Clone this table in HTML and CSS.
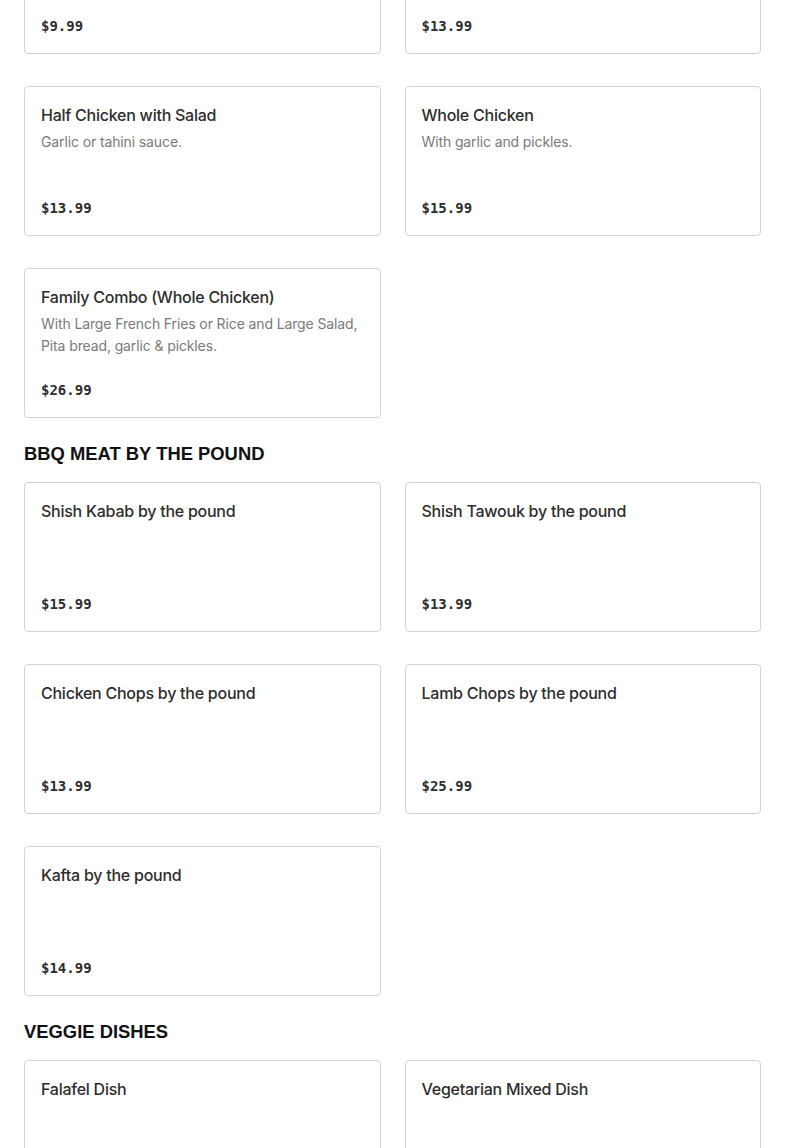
FILE: index.html
```html
<!DOCTYPE html>
<html lang="en">
<head>
<meta charset="utf-8">
<title>Menu</title>
<link rel="stylesheet" href="styles.css">
</head>
<body>
<main class="menu">
  <section class="section section-first">
    <div class="grid">
      <div class="card">
        <h3 class="card-title">Quarter Chicken</h3>
        <p class="card-desc">Garlic or tahini sauce.</p>
        <div class="card-price">$9.99</div>
      </div>
      <div class="card">
        <h3 class="card-title">Half Chicken</h3>
        <p class="card-desc">Garlic or tahini sauce.</p>
        <div class="card-price">$13.99</div>
      </div>
      <div class="card">
        <h3 class="card-title">Half Chicken with Salad</h3>
        <p class="card-desc">Garlic or tahini sauce.</p>
        <div class="card-price">$13.99</div>
      </div>
      <div class="card">
        <h3 class="card-title">Whole Chicken</h3>
        <p class="card-desc">With garlic and pickles.</p>
        <div class="card-price">$15.99</div>
      </div>
      <div class="card">
        <h3 class="card-title">Family Combo (Whole Chicken)</h3>
        <p class="card-desc">With Large French Fries or Rice and Large Salad, Pita bread, garlic &amp; pickles.</p>
        <div class="card-price">$26.99</div>
      </div>
    </div>
  </section>

  <section class="section">
    <h2 class="section-title">BBQ MEAT BY THE POUND</h2>
    <div class="grid">
      <div class="card">
        <h3 class="card-title">Shish Kabab by the pound</h3>
        <div class="card-price">$15.99</div>
      </div>
      <div class="card">
        <h3 class="card-title">Shish Tawouk by the pound</h3>
        <div class="card-price">$13.99</div>
      </div>
      <div class="card">
        <h3 class="card-title">Chicken Chops by the pound</h3>
        <div class="card-price">$13.99</div>
      </div>
      <div class="card">
        <h3 class="card-title">Lamb Chops by the pound</h3>
        <div class="card-price">$25.99</div>
      </div>
      <div class="card">
        <h3 class="card-title">Kafta by the pound</h3>
        <div class="card-price">$14.99</div>
      </div>
    </div>
  </section>

  <section class="section">
    <h2 class="section-title">VEGGIE DISHES</h2>
    <div class="grid">
      <div class="card">
        <h3 class="card-title">Falafel Dish</h3>
        <div class="card-price">$12.99</div>
      </div>
      <div class="card">
        <h3 class="card-title">Vegetarian Mixed Dish</h3>
        <div class="card-price">$13.99</div>
      </div>
    </div>
  </section>
</main>
</body>
</html>
```
FILE: styles.css
```css
* { box-sizing: border-box; }
html, body { margin: 0; padding: 0; background: #fff; }
body {
  font-family: "Inter", "Noto Sans", sans-serif;
  color: #2d2d2d;
  overflow: hidden;
}
.menu {
  padding: 0 24px;
  margin-top: -96px;
}
.section { padding-top: 24px; }
.section-first { padding-top: 0; }
.section-title {
  margin: 0 0 16px;
  font-family: "Liberation Sans", Arial, sans-serif;
  font-weight: 700;
  font-size: 18.4px;
  line-height: 24px;
  color: #111;
}
.grid {
  display: grid;
  grid-template-columns: 1fr 1fr;
  column-gap: 24px;
  row-gap: 32px;
}
.card {
  display: flex;
  flex-direction: column;
  min-height: 150px;
  padding: 16px;
  border: 1px solid #d3d3d3;
  border-radius: 4px;
  background: #fff;
}
.card-title {
  margin: 0;
  font-size: 16px;
  line-height: 24px;
  font-weight: 500;
  letter-spacing: -0.25px;
  color: #2d2d2d;
}
.card-desc {
  margin: 4px 0 0;
  font-size: 14px;
  line-height: 22px;
  letter-spacing: -0.12px;
  color: #7a7a7a;
}
.card-price {
  margin-top: auto;
  padding-top: 12px;
  font-family: "DejaVu Sans Mono", "Liberation Mono", monospace;
  font-weight: 700;
  font-size: 14px;
  line-height: 22px;
  color: #2d2d2d;
}
```
